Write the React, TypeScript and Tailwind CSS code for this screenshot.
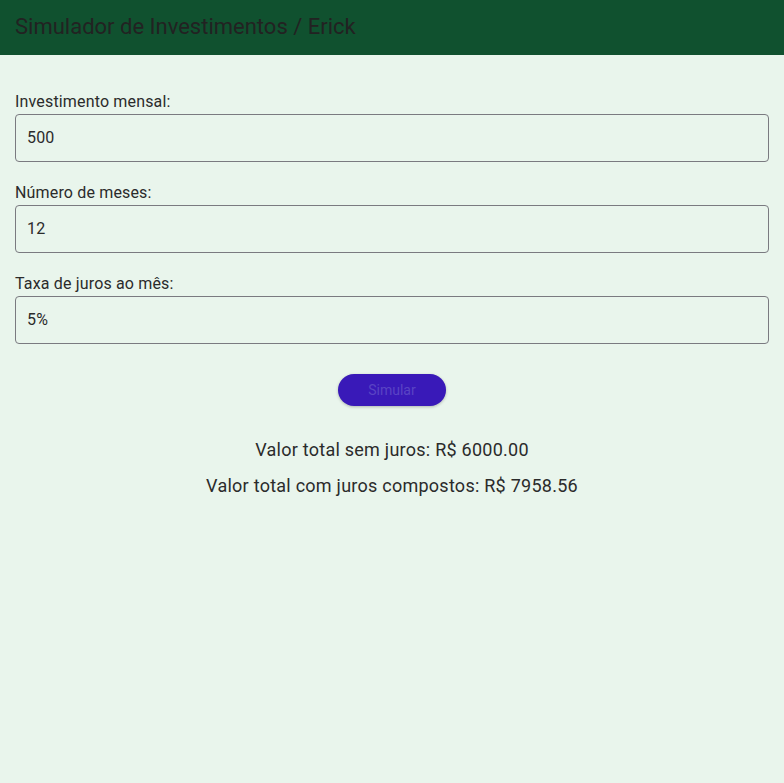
import { useState } from "react";

const font = { fontFamily: "Roboto, 'Noto Sans', sans-serif" };

function Field({ label, value, onChange }: { label: string; value: string; onChange: (v: string) => void }) {
  return (
    <div className="flex flex-col">
      <label className="text-[16px] leading-[20px] text-[#2b2b2b] tracking-[0.01em]">{label}</label>
      <input
        value={value}
        onChange={(e) => onChange(e.target.value)}
        className="mt-[2px] h-[48px] w-full rounded-[4px] border border-[#7a7a80] bg-transparent px-[11px] pb-[2px] text-[16px] tracking-[0.01em] text-[#2b2b2b] outline-none"
      />
    </div>
  );
}

export default function App() {
  const [monthly, setMonthly] = useState("500");
  const [months, setMonths] = useState("12");
  const [rate, setRate] = useState("5%");

  return (
    <div className="min-h-[783px] bg-[#e9f5ec]" style={font}>
      <header className="flex h-[55px] items-center bg-[#10512f] px-[15px] pb-[2px]">
        <h1 className="text-[22px] font-normal text-[#222222]">Simulador de Investimentos / Erick</h1>
      </header>

      <main className="flex flex-col px-[15px] pt-[37px]">
        <div className="flex flex-col gap-[21px]">
          <Field label="Investimento mensal:" value={monthly} onChange={setMonthly} />
          <Field label="Número de meses:" value={months} onChange={setMonths} />
          <Field label="Taxa de juros ao mês:" value={rate} onChange={setRate} />
        </div>

        <div className="mt-[30px] flex justify-center">
          <button className="h-[32px] w-[108px] rounded-full bg-[#3919b8] text-[14px] text-[#5a44c4] shadow-[0_1px_3px_rgba(0,0,0,0.25)]">
            Simular
          </button>
        </div>

        <div className="mt-[32px] flex flex-col items-center gap-[12px] text-[18px] leading-[24px] tracking-[0.25px] text-[#2b2b2b]">
          <p>Valor total sem juros: R$ 6000.00</p>
          <p>Valor total com juros compostos: R$ 7958.56</p>
        </div>
      </main>
    </div>
  );
}
